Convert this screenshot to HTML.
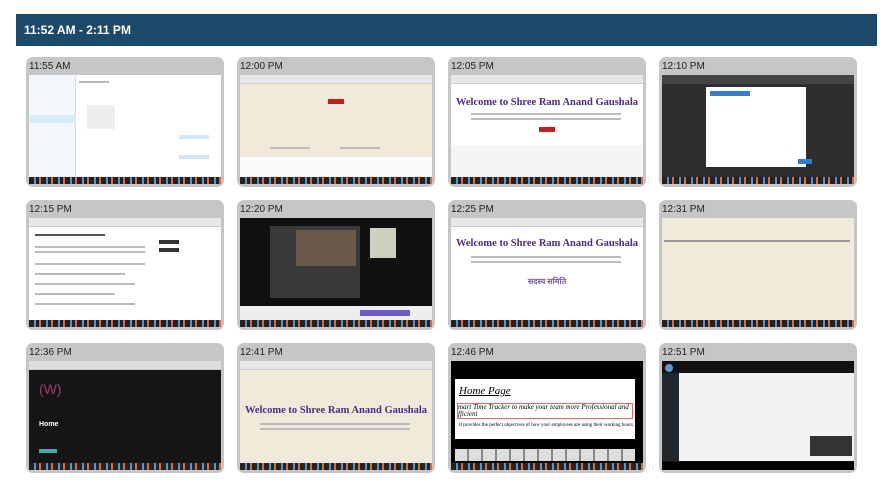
<!DOCTYPE html>
<html><head><meta charset="utf-8"><style>
*{margin:0;padding:0;box-sizing:border-box}
body{width:893px;height:484px;background:#fff;font-family:"Liberation Sans",sans-serif;position:relative;overflow:hidden}
.hdr{position:absolute;left:16px;top:14px;width:861px;height:32px;background:#1b4a6b;color:#fff;font-weight:bold;font-size:12px;line-height:32px;padding-left:8px}
.card{position:absolute;width:198px;height:130px;background:#c6c6c6;border-radius:7px}
.card .t{position:absolute;left:3px;top:4px;font-size:10px;color:#222}
.sc{position:absolute;left:3px;top:18px;width:192px;height:109px;overflow:hidden;background:#fff}
.tb{position:absolute;left:0;bottom:0;width:100%;height:7px;background:#222;background-image:repeating-linear-gradient(90deg,#222 0 5px,#5a8fd0 5px 7px,#222 7px 10px,#d96a3a 10px 12px)}
.bar{position:absolute;left:0;top:0;width:100%;height:9px;background:#e8e8e8;border-bottom:1px solid #ccc}
.w{position:absolute;font-family:"Liberation Serif",serif;font-weight:bold;color:#4b2c86;font-size:10.5px;width:100%;text-align:center;white-space:nowrap}
.b{position:absolute;background:#b22}
.l{position:absolute;height:2px;background:#bbb}
</style></head><body>
<div class="hdr">11:52 AM - 2:11 PM</div>

<div class="card" style="left:26px;top:57px"><div class="t">11:55 AM</div><div class="sc">
<div style="position:absolute;left:0;top:0;width:47px;height:102px;background:#f3f6fa;border-right:1px solid #ddd"></div>
<div style="position:absolute;left:0;top:40px;width:47px;height:8px;background:#d6ebf8"></div>
<div class="l" style="left:50px;top:6px;width:30px"></div>
<div style="position:absolute;left:58px;top:30px;width:28px;height:24px;background:#eee"></div>
<div style="position:absolute;left:150px;top:60px;width:30px;height:4px;background:#cde8f8"></div>
<div style="position:absolute;left:150px;top:80px;width:30px;height:4px;background:#cde8f8"></div>
<div class="tb"></div></div></div>

<div class="card" style="left:237px;top:57px"><div class="t">12:00 PM</div><div class="sc" style="background:#efead9">
<div class="bar"></div><div class="b" style="left:88px;top:24px;width:16px;height:5px"></div>
<div class="l" style="left:30px;top:72px;width:40px"></div><div class="l" style="left:100px;top:72px;width:40px"></div>
<div style="position:absolute;left:0;top:82px;width:100%;height:20px;background:#fafafa"></div>
<div class="tb"></div></div></div>

<div class="card" style="left:448px;top:57px"><div class="t">12:05 PM</div><div class="sc">
<div class="bar"></div><div class="w" style="top:22px">Welcome to Shree Ram Anand Gaushala</div>
<div class="l" style="left:20px;top:38px;width:150px"></div><div class="l" style="left:20px;top:43px;width:150px"></div>
<div class="b" style="left:88px;top:52px;width:16px;height:5px"></div>
<div style="position:absolute;left:0;top:70px;width:100%;height:32px;background:#f5f5f5"></div>
<div class="tb"></div></div></div>

<div class="card" style="left:659px;top:57px"><div class="t">12:10 PM</div><div class="sc" style="background:#2d2d2d">
<div style="position:absolute;left:0;top:0;width:100%;height:9px;background:#444"></div>
<div style="position:absolute;left:44px;top:12px;width:100px;height:80px;background:#fff"></div>
<div style="position:absolute;left:48px;top:16px;width:40px;height:5px;background:#3b7bd0"></div>
<div style="position:absolute;left:136px;top:84px;width:14px;height:5px;background:#2a7fd0"></div>
<div class="tb"></div></div></div>

<div class="card" style="left:26px;top:200px"><div class="t">12:15 PM</div><div class="sc">
<div class="bar"></div>
<div class="l" style="left:6px;top:16px;width:70px;background:#555"></div>
<div class="l" style="left:6px;top:28px;width:110px"></div><div class="l" style="left:6px;top:33px;width:110px"></div>
<div class="l" style="left:6px;top:45px;width:110px"></div><div class="l" style="left:6px;top:55px;width:90px"></div>
<div class="l" style="left:6px;top:65px;width:100px"></div><div class="l" style="left:6px;top:75px;width:80px"></div><div class="l" style="left:6px;top:85px;width:100px"></div>
<div style="position:absolute;left:130px;top:22px;width:20px;height:4px;background:#333"></div>
<div style="position:absolute;left:130px;top:30px;width:20px;height:4px;background:#333"></div>
<div class="tb"></div></div></div>

<div class="card" style="left:237px;top:200px"><div class="t">12:20 PM</div><div class="sc" style="background:#111">
<div style="position:absolute;left:30px;top:8px;width:90px;height:72px;background:#3a3a3a"></div>
<div style="position:absolute;left:56px;top:12px;width:60px;height:36px;background:#6a5a4a"></div>
<div style="position:absolute;left:130px;top:10px;width:26px;height:30px;background:#cfcfc0"></div>
<div style="position:absolute;left:0;top:88px;width:100%;height:14px;background:#eee"></div>
<div style="position:absolute;left:120px;top:92px;width:50px;height:6px;background:#6a5acd"></div>
<div class="tb"></div></div></div>

<div class="card" style="left:448px;top:200px"><div class="t">12:25 PM</div><div class="sc">
<div class="bar"></div><div class="w" style="top:20px">Welcome to Shree Ram Anand Gaushala</div>
<div class="l" style="left:20px;top:38px;width:150px"></div><div class="l" style="left:20px;top:43px;width:150px"></div>
<div class="w" style="top:58px;font-size:8px;color:#7a5a9a">सदस्य समिति</div>
<div class="tb"></div></div></div>

<div class="card" style="left:659px;top:200px"><div class="t">12:31 PM</div><div class="sc" style="background:#efead9">
<div class="l" style="left:2px;top:22px;width:186px;background:#999"></div>
<div class="tb"></div></div></div>

<div class="card" style="left:26px;top:343px"><div class="t">12:36 PM</div><div class="sc" style="background:#151515">
<div class="bar" style="background:#ddd"></div>
<div style="position:absolute;left:10px;top:20px;color:#a03a6a;font-size:14px">(W)</div>
<div style="position:absolute;left:10px;top:60px;color:#fff;font-size:7px;font-weight:bold">Home</div>
<div style="position:absolute;left:10px;top:88px;width:18px;height:4px;background:#4aa"></div>
<div class="tb"></div></div></div>

<div class="card" style="left:237px;top:343px"><div class="t">12:41 PM</div><div class="sc" style="background:#efead9">
<div class="bar"></div><div class="w" style="top:44px">Welcome to Shree Ram Anand Gaushala</div>
<div class="l" style="left:20px;top:62px;width:150px"></div><div class="l" style="left:20px;top:67px;width:150px"></div>
<div class="tb"></div></div></div>

<div class="card" style="left:448px;top:343px"><div class="t">12:46 PM</div><div class="sc" style="background:#000">
<div style="position:absolute;left:4px;top:18px;width:180px;height:60px;background:#fff"></div>
<div style="position:absolute;left:8px;top:24px;font-family:'Liberation Serif',serif;font-style:italic;font-size:11px;text-decoration:underline">Home Page</div>
<div style="position:absolute;left:6px;top:42px;width:176px;height:16px;border:1px solid #e66;font-family:'Liberation Serif',serif;font-style:italic;font-size:7px;line-height:7px">mart Time Tracker to make your team more Professional and fficient</div>
<div style="position:absolute;left:8px;top:62px;font-family:'Liberation Serif',serif;font-size:5px">It provides the perfect objectives of how your employees are using their working hours.</div>
<div style="position:absolute;left:4px;top:88px;width:180px;height:12px;background:repeating-linear-gradient(90deg,#ddd 0 12px,#888 12px 14px)"></div>
<div class="tb"></div></div></div>

<div class="card" style="left:659px;top:343px"><div class="t">12:51 PM</div><div class="sc" style="background:#111">
<div style="position:absolute;left:17px;top:12px;width:175px;height:88px;background:#f2f2f2"></div>
<div style="position:absolute;left:0;top:12px;width:17px;height:88px;background:#23282d"></div>
<div style="position:absolute;left:3px;top:3px;width:8px;height:8px;border-radius:50%;background:#5b9bd5"></div>
<div style="position:absolute;left:148px;top:75px;width:42px;height:20px;background:#333"></div>
<div style="position:absolute;left:0;top:101px;width:100%;height:8px;background:#000"></div>
</div></div>
</body></html>
